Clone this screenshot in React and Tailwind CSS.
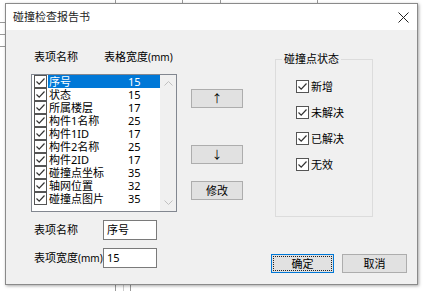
import React from "react";

const rows = [
  ["序号", "15"],
  ["状态", "15"],
  ["所属楼层", "17"],
  ["构件1名称", "25"],
  ["构件1ID", "17"],
  ["构件2名称", "25"],
  ["构件2ID", "17"],
  ["碰撞点坐标", "35"],
  ["轴网位置", "32"],
  ["碰撞点图片", "35"],
];

function Check() {
  return (
    <svg width="13" height="13" viewBox="0 0 13 13" className="shrink-0">
      <rect x="0.5" y="0.5" width="12" height="12" fill="#fff" stroke="#555" />
      <path d="M2.5 6.5 L5.2 9.2 L10.5 3.5" fill="none" stroke="#333" strokeWidth="1.2" />
    </svg>
  );
}

function Btn({ children, className = "" }) {
  return (
    <div
      className={
        "h-[19px] flex items-center justify-center border border-[#adadad] bg-[#e1e1e1] text-[11px] leading-[13px] text-black " +
        className
      }
    >
      {children}
    </div>
  );
}

export default function App() {
  const font = { fontFamily: '"Noto Sans", "Noto Sans CJK SC", sans-serif' };
  return (
    <div
      className="relative w-[423px] h-[291px] bg-white overflow-hidden pl-[5px] pt-[3px]"
      style={font}
    >
      {/* background table lines */}
      <div className="absolute left-[115px] top-0 w-px h-[3px] bg-[#999]" />
      <div className="absolute left-[182px] top-0 w-px h-[3px] bg-[#999]" />
      <div className="absolute left-[220px] top-0 w-px h-[3px] bg-[#999]" />
      <div className="absolute left-[317px] top-0 w-px h-[3px] bg-[#999]" />
      <div className="absolute left-[115px] top-[285px] w-px h-[6px] bg-[#999]" />
      <div className="absolute left-[123px] top-[285px] w-px h-[6px] bg-[#ccc]" />
      <div className="absolute left-[130px] top-[285px] w-px h-[6px] bg-[#999]" />
      <div className="absolute left-0 top-[22px] w-[5px] h-px bg-[#999]" />
      <div className="absolute left-0 top-[34px] w-[5px] h-px bg-[#999]" />
      <div className="absolute left-0 top-[46px] w-[5px] h-px bg-[#999]" />

      <div className="relative w-[413px] h-[282px] border border-[#8a8a8a] bg-[#f0f0f0] shadow-[1px_1px_3px_rgba(0,0,0,0.35)] flex flex-col">
        {/* title bar */}
        <div className="h-[26px] bg-white flex items-center justify-between pl-[7px] pr-[8px] shrink-0">
          <span className="text-[11px] leading-[14px] text-[#222]">碰撞检查报告书</span>
          <svg width="11" height="11" viewBox="0 0 11 11">
            <path d="M0.5 0.5 L10.5 10.5 M10.5 0.5 L0.5 10.5" stroke="#222" strokeWidth="1" />
          </svg>
        </div>

        {/* body */}
        <div className="flex flex-1">
          {/* left column */}
          <div className="flex flex-col pl-[25px] w-[172px] shrink-0">
            <div className="mt-[20px] h-[14px] flex items-center text-[11px] leading-[14px] text-black whitespace-nowrap">
              <span className="ml-[3px] w-[70px]">表项名称</span>
              <span>表格宽度<span className="text-[10px]">(mm)</span></span>
            </div>
            <div className="mt-[10px] h-[138px] w-[146px] border border-[#828790] bg-white flex">
              <div className="flex-1 flex flex-col">
                {rows.map(([n, w], i) => (
                  <div key={n} className="h-[13px] flex items-center pl-[2px]">
                    <Check />
                    <div
                      className={
                        "ml-[1px] flex-1 h-[13px] flex items-center text-[11px] leading-[13px] overflow-hidden " +
                        (i === 0 ? "bg-[#0078d7] text-white" : "text-black")
                      }
                    >
                      <span className="w-[80px] pl-[1px] whitespace-nowrap">{n}</span>
                      <span>{w}</span>
                    </div>
                  </div>
                ))}
              </div>
              <div className="w-[16px] bg-[#f0f0f0] flex flex-col items-center justify-between py-[6px]">
                <svg width="9" height="5" viewBox="0 0 9 5">
                  <path d="M0.5 4.5 L4.5 0.5 L8.5 4.5" fill="none" stroke="#c0c0c0" />
                </svg>
                <svg width="9" height="5" viewBox="0 0 9 5">
                  <path d="M0.5 0.5 L4.5 4.5 L8.5 0.5" fill="none" stroke="#c0c0c0" />
                </svg>
              </div>
            </div>
            <div className="mt-[8px] h-[20px] flex items-center">
              <span className="ml-[3px] w-[69px] text-[11px] leading-[14px] text-black whitespace-nowrap">表项名称</span>
              <div className="w-[54px] h-[20px] border border-[#7a7a7a] bg-white text-[11px] leading-[14px] flex items-center pl-[3px]">序号</div>
            </div>
            <div className="mt-[8px] h-[20px] flex items-center">
              <span className="ml-[3px] w-[69px] text-[11px] leading-[14px] text-black whitespace-nowrap">
                表项宽度<span className="text-[10px]">(mm)</span>
              </span>
              <div className="w-[54px] h-[20px] border border-[#7a7a7a] bg-white text-[11px] leading-[14px] flex items-center pl-[3px]">15</div>
            </div>
          </div>

          {/* right part */}
          <div className="flex flex-col flex-1">
            <div className="flex">
              <div className="ml-[13px] w-[52px] flex flex-col">
                <Btn className="mt-[59px]">↑</Btn>
                <Btn className="mt-[37px]">↓</Btn>
                <Btn className="mt-[17px]">修改</Btn>
              </div>
              <div className="relative ml-[32px] mt-[29px] w-[98px] h-[158px] border border-[#dcdcdc]">
                <span className="absolute left-[6px] top-[-8px] bg-[#f0f0f0] px-[2px] text-[11px] leading-[14px] text-black whitespace-nowrap">
                  碰撞点状态
                </span>
                <div className="flex flex-col pl-[20px] pt-[20px] gap-[13px]">
                  {["新增", "未解决", "已解决", "无效"].map((t) => (
                    <div key={t} className="h-[13px] flex items-center">
                      <Check />
                      <span className="ml-[2px] text-[11px] text-black leading-[13px]">{t}</span>
                    </div>
                  ))}
                </div>
              </div>
            </div>
            <div className="mt-[37px] flex justify-end pr-[10px] gap-[8px]">
              <div className="w-[63px] h-[19px] border border-[#0078d7] bg-[#e1e1e1] flex items-center justify-center p-[1px]">
                <div className="w-full h-full border border-dotted border-[#222] flex items-center justify-center text-[11px] leading-[13px]">
                  确定
                </div>
              </div>
              <Btn className="w-[65px]">取消</Btn>
            </div>
          </div>
        </div>
      </div>
    </div>
  );
}
